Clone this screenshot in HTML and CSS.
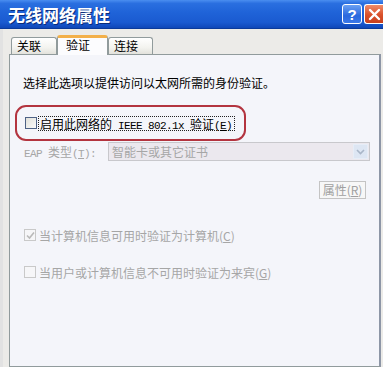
FILE: index.html
```html
<!DOCTYPE html>
<html lang="zh-CN">
<head>
<meta charset="utf-8">
<title>无线网络属性</title>
<link rel="stylesheet" href="styles.css">
</head>
<body>
<div class="window">
  <div class="titlebar">
    <span class="title">无线网络属性</span>
    <span class="tb-btn help">?</span>
    <span class="tb-btn close"><svg width="13" height="13" viewBox="0 0 13 13"><path d="M2 2 L11 11 M11 2 L2 11" stroke="#fff" stroke-width="2.4" stroke-linecap="round"/></svg></span>
  </div>
  <div class="body">
    <div class="tabs">
      <div class="tab t1">关联</div>
      <div class="tab t2 active">验证</div>
      <div class="tab t3">连接</div>
    </div>
    <div class="panel">
      <p class="desc">选择此选项以提供访问以太网所需的身份验证。</p>
      <div class="highlight">
        <span class="cb"></span>
        <span class="focus">启用此网络的<span class="mono"> IEEE 802.1x </span>验证<span class="mono">(<u>E</u>)</span></span>
      </div>
      <div class="eap-row">
        <span class="eap-label"><span class="mono">EAP </span>类型<span class="mono">(<u>T</u>):</span></span>
        <div class="select">
          <span class="select-text">智能卡或其它证书</span>
          <span class="select-btn"><svg width="9" height="6" viewBox="0 0 9 6"><path d="M1 1 L4.5 4.5 L8 1" fill="none" stroke="#a9b6c8" stroke-width="1.6"/></svg></span>
        </div>
      </div>
      <div class="btn-row">
        <span class="btn">属性(<u>R</u>)</span>
      </div>
      <div class="opt opt1">
        <span class="cb dis"><svg width="9" height="9" viewBox="0 0 9 9"><path d="M1 4.5 L3.5 7 L8 1.5" fill="none" stroke="#b9b9b9" stroke-width="1.6"/></svg></span>
        <span class="opt-text">当计算机信息可用时验证为计算机(<u>C</u>)</span>
      </div>
      <div class="opt opt2">
        <span class="cb dis"></span>
        <span class="opt-text">当用户或计算机信息不可用时验证为来宾(<u>G</u>)</span>
      </div>
    </div>
  </div>
</div>
</body>
</html>
```

FILE: styles.css
```css
* { box-sizing: border-box; }
html, body {
  margin: 0;
  padding: 0;
  width: 383px;
  height: 367px;
  overflow: hidden;
  font-family: "Noto Sans CJK SC", "Liberation Sans", sans-serif;
  font-size: 12px;
  color: #000;
}
.window {
  width: 383px;
  height: 367px;
  display: flex;
  flex-direction: column;
  background: #ecebe8;
}
.titlebar {
  height: 29px;
  flex: none;
  display: flex;
  align-items: center;
  padding-left: 8px;
  background: linear-gradient(to bottom, #4a8ef0 0%, #2a6fe0 12%, #1f63d8 45%, #1a5ad0 80%, #0f47b8 100%);
  border-bottom: 1px solid #0b3a9a;
}
.title {
  color: #fff;
  font-weight: bold;
  font-size: 17px;
  letter-spacing: 0px;
  text-shadow: 1px 1px 0 #0a2c7a;
  flex: 1;
  line-height: 29px;
}
.tb-btn {
  width: 20px;
  height: 20px;
  border: 1px solid #fff;
  border-radius: 3px;
  display: flex;
  align-items: center;
  justify-content: center;
  color: #fff;
  font-family: "Liberation Sans", sans-serif;
  font-weight: bold;
  font-size: 15px;
}
.help {
  background: linear-gradient(to bottom, #6aa0f2, #2a68de 60%, #3b78e8);
  margin-right: 2px;
}
.close {
  width: 19px;
  border-right: none;
  border-radius: 3px 0 0 3px;
  background: linear-gradient(to bottom, #f08c6a, #d9502a 55%, #c8401e);
}
.body {
  flex: 1;
  display: flex;
  flex-direction: column;
  padding: 6px 2px 0 6px;
  border-left: 3px solid #e2e2e2;
}
.tabs {
  height: 19px;
  display: flex;
  align-items: flex-end;
  padding-left: 2px;
}
.tab {
  height: 17px;
  border: 1px solid #919b9c;
  border-bottom: none;
  border-radius: 3px 3px 0 0;
  background: linear-gradient(to bottom, #ffffff, #f3f3ef 60%, #e3e2dc);
  padding-left: 5px;
  line-height: 15px;
  font-size: 12px;
}
.t1 { width: 46px; }
.t2 { width: 51px; }
.t3 { width: 45px; }
.tab.active {
  height: 20px;
  margin-bottom: -1px;
  position: relative;
  z-index: 1;
  background: #fcfcfe;
  border-top: 3px solid #f3b04a;
  padding-left: 8px;
  line-height: 13px;
}
.panel {
  flex: 1;
  border: 1px solid #919b9c;
  border-right: 2px solid #8d96a6;
  background: #f4f5fa;
  display: flex;
  flex-direction: column;
}
.desc {
  margin: 21px 0 0 13px;
  line-height: 14px;
}
.highlight {
  margin: 15px 0 0 5px;
  width: 231px;
  height: 36px;
  border: 2px solid #b3343f;
  border-radius: 11px;
  display: flex;
  align-items: center;
  padding-left: 8px;
}
.cb {
  width: 12px;
  height: 12px;
  border: 1px solid #4d6185;
  background: linear-gradient(135deg, #e0e0da, #fafafa);
  display: inline-flex;
  align-items: center;
  justify-content: center;
  flex: none;
}
.cb.dis {
  border-color: #c9c9c9;
  background: #f6f6f8;
}
.focus {
  margin-left: 1px;
  border: 1px dotted #222;
  height: 15px;
  line-height: 13px;
  padding: 0 2px 0 1px;
  white-space: nowrap;
}
.mono {
  font-family: "Liberation Mono", monospace;
  font-size: 11px;
  letter-spacing: -0.6px;
}
.eap-row {
  margin-top: 1px;
  display: flex;
  align-items: center;
  height: 19px;
  padding-left: 14px;
  color: #a6a6a6;
}
.eap-label {
  width: 84px;
  flex: none;
  white-space: nowrap;
}
.select {
  flex: 1;
  margin-right: 9px;
  height: 19px;
  border: 1px solid #c8c8cc;
  background: #ebe8ee;
  display: flex;
  align-items: center;
  padding-left: 3px;
}
.select-text {
  flex: 1;
  color: #a6a6a6;
}
.select-btn {
  width: 15px;
  height: 15px;
  margin-right: 1px;
  background: #dde6f3;
  border: 1px solid #e6edf7;
  display: flex;
  align-items: center;
  justify-content: center;
}
.btn-row {
  margin-top: 20px;
  display: flex;
  justify-content: flex-end;
  padding-right: 13px;
}
.btn {
  width: 47px;
  height: 18px;
  border: 1px solid #c4c4c4;
  background: #f7f7f7;
  color: #a0a0a0;
  line-height: 16px;
  text-align: center;
}
.opt {
  display: flex;
  align-items: center;
  height: 16px;
  padding-left: 14px;
  color: #a6a6a6;
}
.opt1 { margin-top: 28px; }
.opt2 { margin-top: 21px; }
.opt-text {
  margin-left: 3px;
  white-space: nowrap;
}
u { text-decoration: underline; }
```
